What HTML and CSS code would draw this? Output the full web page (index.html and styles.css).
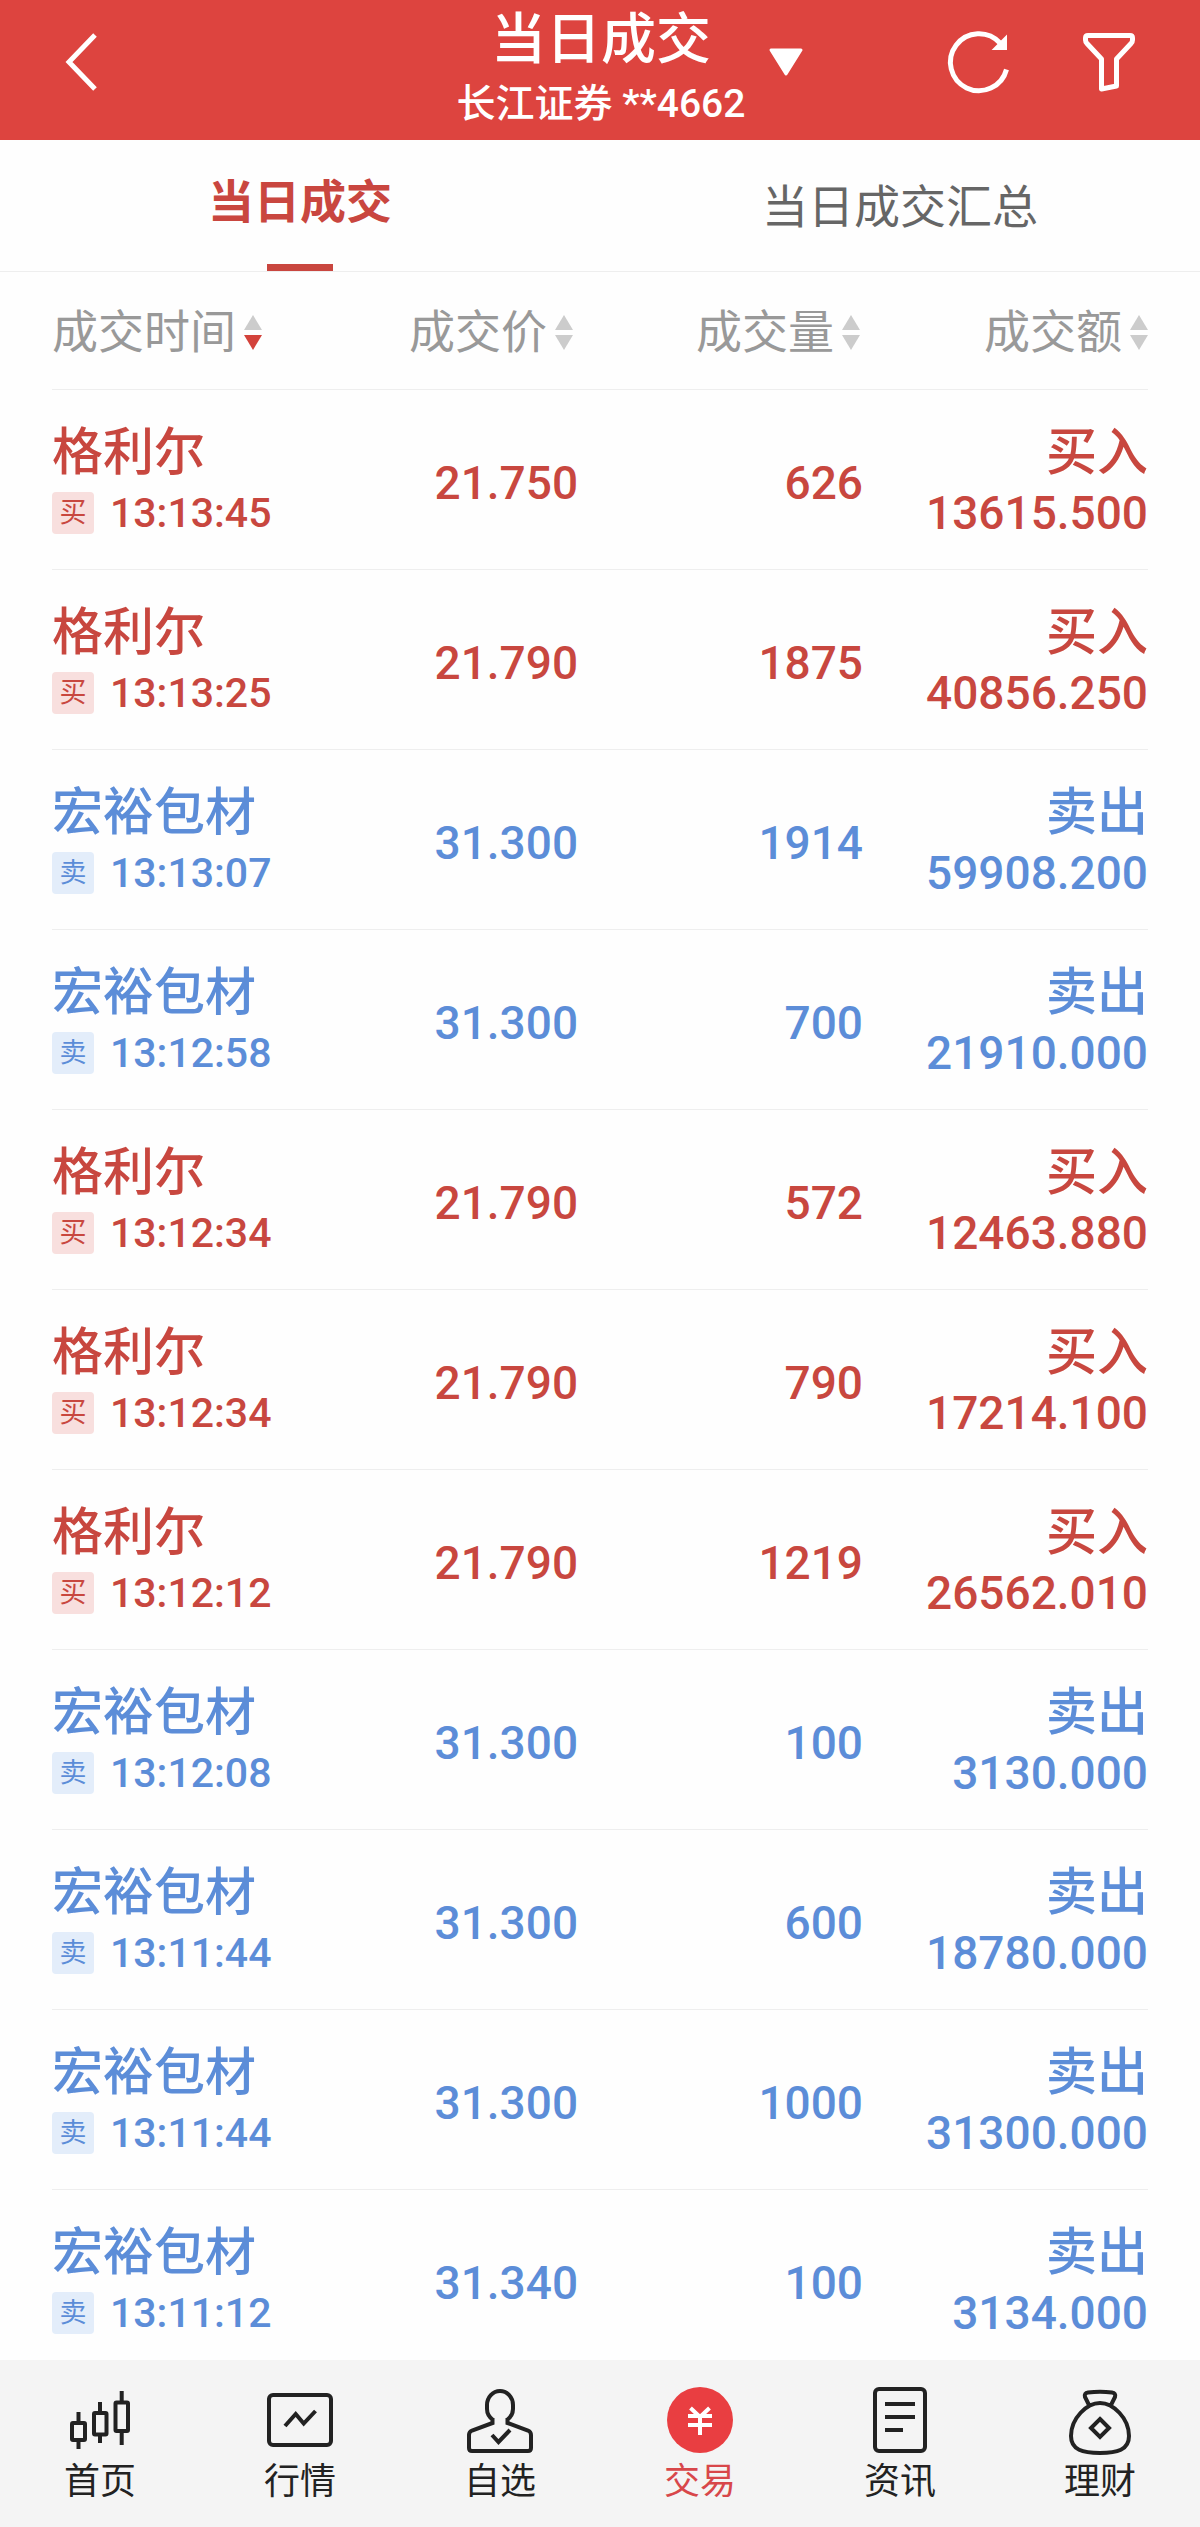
FILE: index.html
```html
<!DOCTYPE html>
<html lang="zh-CN">
<head>
    <meta charset="UTF-8">
    <meta name="viewport" content="width=device-width, initial-scale=1.0">
    <title>当日成交</title>
    <link rel="stylesheet" href="styles.css">
</head>
<body>
    <header class="top-bar">
        <button class="icon-btn back" aria-label="返回">
            <svg width="34" height="66" viewBox="0 0 34 66"><path d="M31 6 L5 33 L31 60" fill="none" stroke="#fff" stroke-width="5"/></svg>
        </button>
        <div class="account">
            <h1>当日成交</h1>
            <p>长江证券 **4662</p>
        </div>
        <div class="actions">
            <button class="icon-btn switch" aria-label="切换账户">
                <svg width="34" height="28" viewBox="0 0 34 28"><path d="M2 2 H32 L17 26 Z" fill="#fff" stroke="#fff" stroke-width="3" stroke-linejoin="round"/></svg>
            </button>
            <button class="icon-btn refresh" aria-label="刷新">
                <svg width="66" height="66" viewBox="0 0 66 66"><path d="M60.5 40.5 A28.5 28.5 0 1 1 54 14" fill="none" stroke="#fff" stroke-width="5"/><path d="M60 8 V20 H48 Z" fill="#fff" stroke="#fff" stroke-width="2"/></svg>
            </button>
            <button class="icon-btn filter" aria-label="筛选">
                <svg width="58" height="66" viewBox="0 0 58 66"><path d="M8 6.5 H50 Q52.5 6.5 52.5 9 V11 Q52.5 13 51 14.5 L36.5 30 V57 L21.5 60 V30 L7 14.5 Q5.5 13 5.5 11 V9 Q5.5 6.5 8 6.5 Z" fill="none" stroke="#fff" stroke-width="5" stroke-linejoin="round"/></svg>
            </button>
        </div>
    </header>

    <nav class="tabs">
        <a href="#" class="tab active">当日成交</a>
        <a href="#" class="tab">当日成交汇总</a>
    </nav>

    <main class="deals">
        <table>
            <thead>
                <tr>
                    <th class="col-time"><button class="sort desc">成交时间<span class="arrows"></span></button></th>
                    <th class="col-price"><button class="sort">成交价<span class="arrows"></span></button></th>
                    <th class="col-qty"><button class="sort">成交量<span class="arrows"></span></button></th>
                    <th class="col-amount"><button class="sort">成交额<span class="arrows"></span></button></th>
                </tr>
            </thead>
            <tbody>
                <tr class="buy">
                    <td><div class="name">格利尔</div><div class="time"><span class="badge">买</span>13:13:45</div></td>
                    <td>21.750</td>
                    <td>626</td>
                    <td><div class="name">买入</div><div class="amount">13615.500</div></td>
                </tr>
                <tr class="buy">
                    <td><div class="name">格利尔</div><div class="time"><span class="badge">买</span>13:13:25</div></td>
                    <td>21.790</td>
                    <td>1875</td>
                    <td><div class="name">买入</div><div class="amount">40856.250</div></td>
                </tr>
                <tr class="sell">
                    <td><div class="name">宏裕包材</div><div class="time"><span class="badge">卖</span>13:13:07</div></td>
                    <td>31.300</td>
                    <td>1914</td>
                    <td><div class="name">卖出</div><div class="amount">59908.200</div></td>
                </tr>
                <tr class="sell">
                    <td><div class="name">宏裕包材</div><div class="time"><span class="badge">卖</span>13:12:58</div></td>
                    <td>31.300</td>
                    <td>700</td>
                    <td><div class="name">卖出</div><div class="amount">21910.000</div></td>
                </tr>
                <tr class="buy">
                    <td><div class="name">格利尔</div><div class="time"><span class="badge">买</span>13:12:34</div></td>
                    <td>21.790</td>
                    <td>572</td>
                    <td><div class="name">买入</div><div class="amount">12463.880</div></td>
                </tr>
                <tr class="buy">
                    <td><div class="name">格利尔</div><div class="time"><span class="badge">买</span>13:12:34</div></td>
                    <td>21.790</td>
                    <td>790</td>
                    <td><div class="name">买入</div><div class="amount">17214.100</div></td>
                </tr>
                <tr class="buy">
                    <td><div class="name">格利尔</div><div class="time"><span class="badge">买</span>13:12:12</div></td>
                    <td>21.790</td>
                    <td>1219</td>
                    <td><div class="name">买入</div><div class="amount">26562.010</div></td>
                </tr>
                <tr class="sell">
                    <td><div class="name">宏裕包材</div><div class="time"><span class="badge">卖</span>13:12:08</div></td>
                    <td>31.300</td>
                    <td>100</td>
                    <td><div class="name">卖出</div><div class="amount">3130.000</div></td>
                </tr>
                <tr class="sell">
                    <td><div class="name">宏裕包材</div><div class="time"><span class="badge">卖</span>13:11:44</div></td>
                    <td>31.300</td>
                    <td>600</td>
                    <td><div class="name">卖出</div><div class="amount">18780.000</div></td>
                </tr>
                <tr class="sell">
                    <td><div class="name">宏裕包材</div><div class="time"><span class="badge">卖</span>13:11:44</div></td>
                    <td>31.300</td>
                    <td>1000</td>
                    <td><div class="name">卖出</div><div class="amount">31300.000</div></td>
                </tr>
                <tr class="sell">
                    <td><div class="name">宏裕包材</div><div class="time"><span class="badge">卖</span>13:11:12</div></td>
                    <td>31.340</td>
                    <td>100</td>
                    <td><div class="name">卖出</div><div class="amount">3134.000</div></td>
                </tr>
            </tbody>
        </table>
    </main>

    <nav class="bottom-nav">
        <a href="#">
            <svg viewBox="0 0 66 66"><rect x="5" y="36" width="13" height="17" rx="1"/><path d="M11.5 25 V36 M11.5 53 V62"/><rect x="27" y="26" width="12.500" height="21.500" rx="1"/><path d="M33 15 V26 M33 48 V56"/><rect x="48.500" y="15.500" width="12.500" height="28.500" rx="1"/><path d="M54.700 4 V15 M54.700 44 V58"/></svg>
            <span>首页</span>
        </a>
        <a href="#">
            <svg viewBox="0 0 66 66"><rect x="2" y="8" width="62" height="50" rx="4"/><path d="M18 39 L28.700 27 L36.700 36.500 L48.500 24"/></svg>
            <span>行情</span>
        </a>
        <a href="#">
            <svg viewBox="0 0 66 66"><path d="M25.500 31 V36 L5 43.500 Q2 44.700 2 48 V61 Q2 64 5 64 H61 Q64 64 64 61 V48 Q64 44.700 61 43.500 L40.500 36 V31 M26 33 C22 30 20 26 20 22 V18 A13 14 0 0 1 46 18 V22 C46 26 44 30 40 33"/><path d="M25 48 L31.500 55 L43 43"/></svg>
            <span>自选</span>
        </a>
        <a href="#" class="current">
            <svg viewBox="0 0 66 66"><circle class="disc" cx="33" cy="33" r="33"/><path class="yen" d="M23.500 21 L33 30 L42.500 21 M21 29 H45 M21 38 H45 M33 29 V48"/></svg>
            <span>交易</span>
        </a>
        <a href="#">
            <svg viewBox="0 0 66 66"><rect x="8" y="2" width="50" height="62" rx="4"/><path d="M18 17 H48 M18 30 H48 M18 43 H36"/></svg>
            <span>资讯</span>
        </a>
        <a href="#">
            <svg viewBox="0 0 66 66"><path d="M33 16 C46 16 62 31 62 49 C62 63 50 66 33 66 C16 66 4 63 4 49 C4 31 20 16 33 16 Z M22 18 L18 10 Q17 6 21 5.500 Q33 4 45 5.500 Q49 6 48 10 L44 18"/><path d="M33 32 L42 41 L33 50 L24 41 Z"/></svg>
            <span>理财</span>
        </a>
    </nav>
</body>
</html>
```

FILE: styles.css
```css
* {
    box-sizing: border-box;
}
body {
    margin: 0;
    height: 100vh;
    display: flex;
    flex-direction: column;
    background: #fefefe;
    color: #222;
    font-family: Roboto, "Noto Sans CJK SC", sans-serif;
}
button {
    padding: 0;
    border: none;
    background: none;
    font: inherit;
    color: inherit;
    cursor: pointer;
}
a {
    color: inherit;
    text-decoration: none;
}
svg {
    display: block;
    overflow: visible;
}

/* top bar */
.top-bar {
    display: grid;
    grid-template-columns: 1fr auto 1fr;
    padding: 0 62px 6px 64px;
    background: #dd443f;
    color: #fff;
    flex-shrink: 0;
}
.icon-btn {
    height: 124px;
    display: flex;
    align-items: center;
}
.account {
    text-align: center;
}
.account h1 {
    margin: 0;
    padding-top: 4px;
    font-size: 55px;
    line-height: 70px;
    font-weight: 500;
}
.account p {
    margin: 0;
    font-size: 39px;
    line-height: 60px;
    font-weight: 500;
}
.actions {
    display: flex;
}
.switch {
    margin: 0 auto 0 24px;
}
.refresh {
    margin-right: 68px;
}

/* tabs */
.tabs {
    display: flex;
    border-bottom: 1px solid #eee;
    flex-shrink: 0;
}
.tab {
    flex: 1;
    height: 131px;
    padding-top: 5px;
    display: flex;
    flex-direction: column;
    align-items: center;
    font-size: 46px;
    line-height: 124px;
    color: #666;
}
.tab.active {
    padding-top: 0;
    color: #c9463f;
    font-weight: bold;
}
.tab.active::after {
    content: "";
    width: 66px;
    height: 7px;
    background: #c9463f;
}

/* deal list */
.deals {
    flex: 1;
    min-height: 0;
    padding: 0 52px;
    overflow-y: auto;
    scrollbar-width: none;
}
table {
    width: 100%;
    table-layout: fixed;
    border-collapse: separate;
    border-spacing: 0;
}
th, td {
    padding: 0;
    border-bottom: 1px solid #eee;
    text-align: right;
}
th {
    height: 118px;
    font-size: 46px;
    line-height: 60px;
    font-weight: normal;
    color: #999;
}
.col-time {
    width: 22%;
}
.col-price {
    width: 26%;
    padding-right: 5px;
}
.col-qty {
    width: 26%;
    padding-right: 3px;
}
.col-amount {
    width: 26%;
}
th:first-child, td:first-child {
    text-align: left;
    white-space: nowrap;
}
.sort {
    display: inline-flex;
    align-items: center;
    gap: 8px;
    vertical-align: middle;
}
.arrows {
    display: flex;
    flex-direction: column;
    gap: 5px;
}
.arrows::before, .arrows::after {
    content: "";
    border: 9px solid transparent;
}
.arrows::before {
    border-top: none;
    border-bottom: 15px solid #ccc;
}
.arrows::after {
    border-bottom: none;
    border-top: 15px solid #ccc;
}
.sort.desc .arrows::after {
    border-top-color: #d3423b;
}
td {
    height: 180px;
    padding-top: 6px;
    font-size: 46px;
    font-weight: 500;
}
.name {
    font-size: 51px;
    line-height: 60px;
}
.time, .amount {
    line-height: 60px;
}
.time {
    display: flex;
    align-items: center;
    gap: 16px;
    font-size: 41px;
}
.badge {
    width: 42px;
    height: 42px;
    border-radius: 4px;
    font-size: 27px;
    line-height: 42px;
    font-weight: normal;
    text-align: center;
}
.buy {
    color: #c8473f;
}
.sell {
    color: #5c8dd8;
}
.buy .badge {
    background: #f8dfde;
}
.sell .badge {
    background: #e3edfa;
}

/* bottom navigation */
.bottom-nav {
    display: flex;
    height: 167px;
    padding-top: 27px;
    background: #f4f4f4;
    flex-shrink: 0;
}
.bottom-nav a {
    flex: 1;
    display: flex;
    flex-direction: column;
    align-items: center;
    gap: 7px;
    font-size: 36px;
    line-height: 44px;
}
.bottom-nav svg {
    width: 66px;
    height: 66px;
    fill: none;
    stroke: #222;
    stroke-width: 4;
}
.bottom-nav .current {
    color: #d8474a;
}
.bottom-nav .disc {
    fill: #e93e41;
    stroke: none;
}
.bottom-nav .yen {
    stroke: #fff;
}
```
